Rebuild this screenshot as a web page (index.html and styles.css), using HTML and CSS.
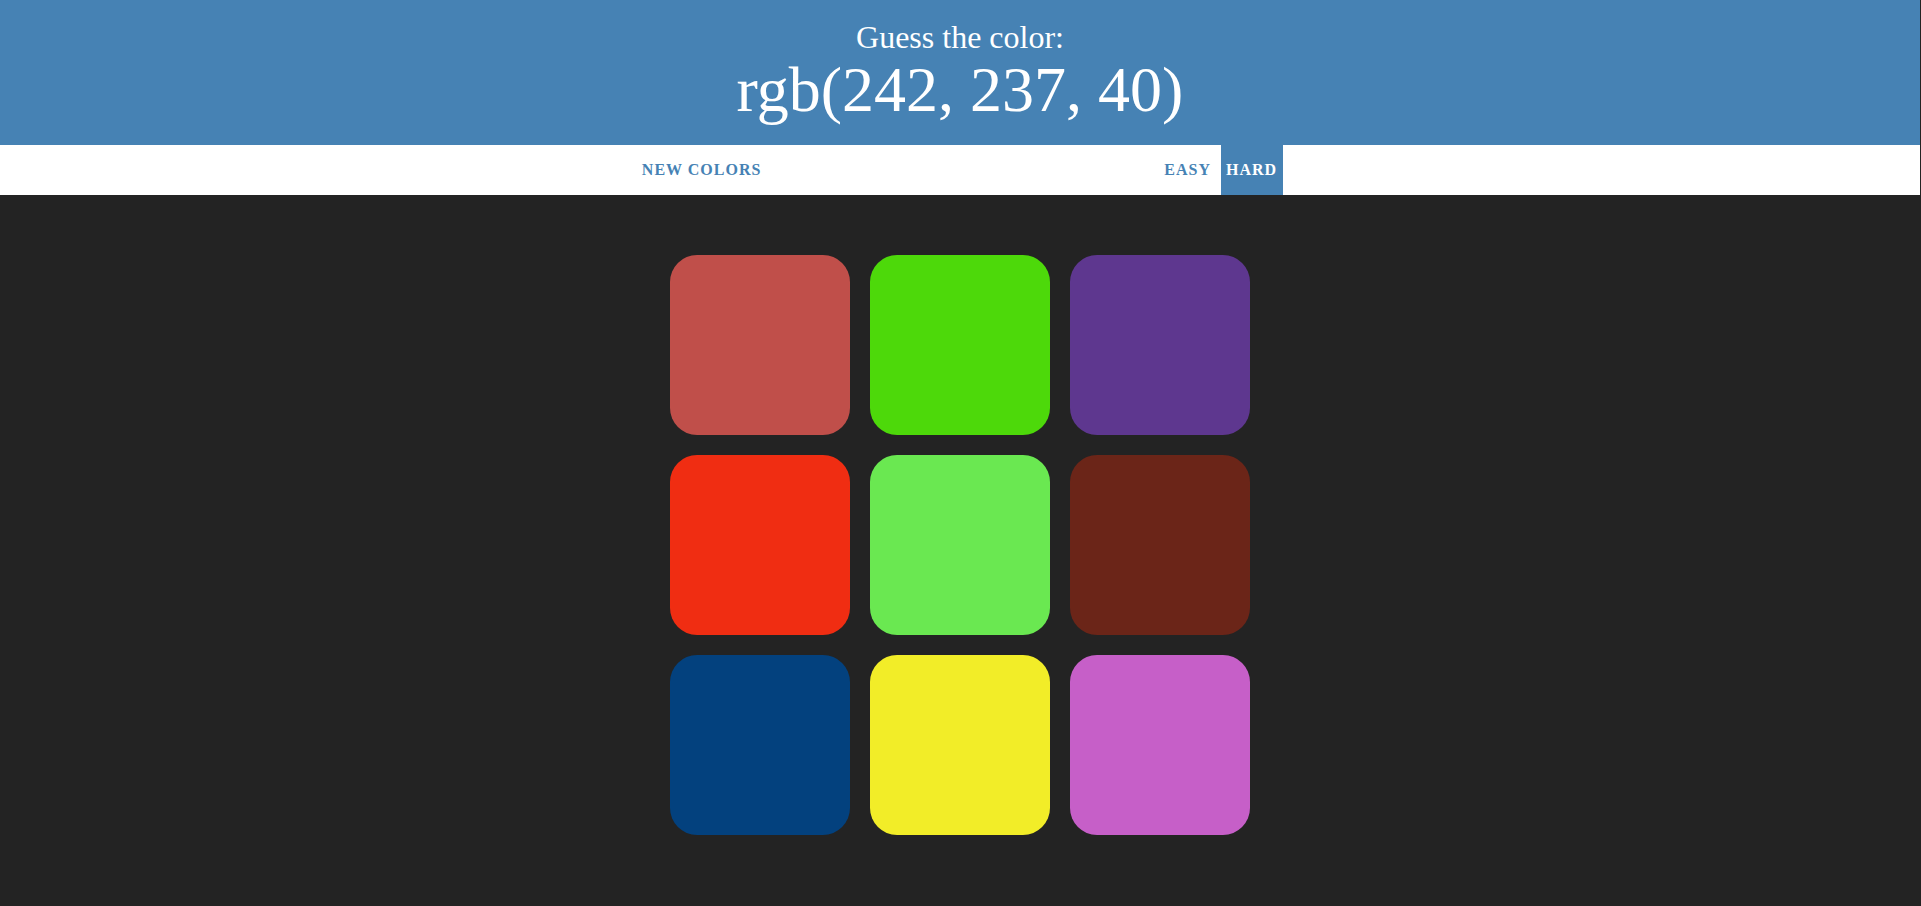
FILE: index.html
```html
<!DOCTYPE html>
<html lang="en">
<head>
<meta charset="utf-8">
<title>Color Game</title>
<link rel="stylesheet" href="styles.css">
</head>
<body>
<h1 class="title">Guess the color:<br><span class="color-display">rgb(242, 237, 40)</span></h1>
<div class="stripe">
  <button class="btn">New Colors</button>
  <span class="message"></span>
  <button class="btn">Easy</button>
  <button class="btn selected">Hard</button>
</div>
<div class="container">
  <div class="square" style="background: rgb(192, 79, 74);"></div>
  <div class="square" style="background: rgb(77, 217, 10);"></div>
  <div class="square" style="background: rgb(94, 55, 143);"></div>
  <div class="square" style="background: rgb(240, 45, 18);"></div>
  <div class="square" style="background: rgb(106, 232, 81);"></div>
  <div class="square" style="background: rgb(107, 37, 24);"></div>
  <div class="square" style="background: rgb(3, 65, 126);"></div>
  <div class="square" style="background: rgb(242, 237, 40);"></div>
  <div class="square" style="background: rgb(198, 95, 200);"></div>
</div>
</body>
</html>
```
FILE: styles.css
```css
html, body {
  margin: 0;
  padding: 0;
}
body {
  background: #232323;
  font-family: "Liberation Serif", "Times New Roman", serif;
  font-size: 16px;
  max-width: 1920px;
}
.title {
  margin: 0;
  padding: 20px 0;
  background: steelblue;
  color: #fff;
  text-align: center;
  font-weight: normal;
  font-size: 32px;
  line-height: 1.09;
}
.color-display {
  font-size: 200%;
}
.stripe {
  background: #fff;
  height: 50px;
  text-align: center;
}
.message {
  display: inline-block;
  width: 20%;
}
.btn {
  border: none;
  background: none;
  text-transform: uppercase;
  height: 100%;
  font-family: inherit;
  font-size: 16px;
  font-weight: 700;
  color: steelblue;
  letter-spacing: 1px;
  padding: 1px 6px 1px 5px;
  margin: 0;
  outline: none;
  vertical-align: top;
}
.btn.selected {
  background: steelblue;
  color: #fff;
}
.container {
  width: 600px;
  box-sizing: border-box;
  margin: 50px auto;
  padding: 10px;
  display: grid;
  grid-template-columns: repeat(3, 180px);
  gap: 20px;
}
.square {
  width: 180px;
  height: 180px;
  border-radius: 27px;
}
```
